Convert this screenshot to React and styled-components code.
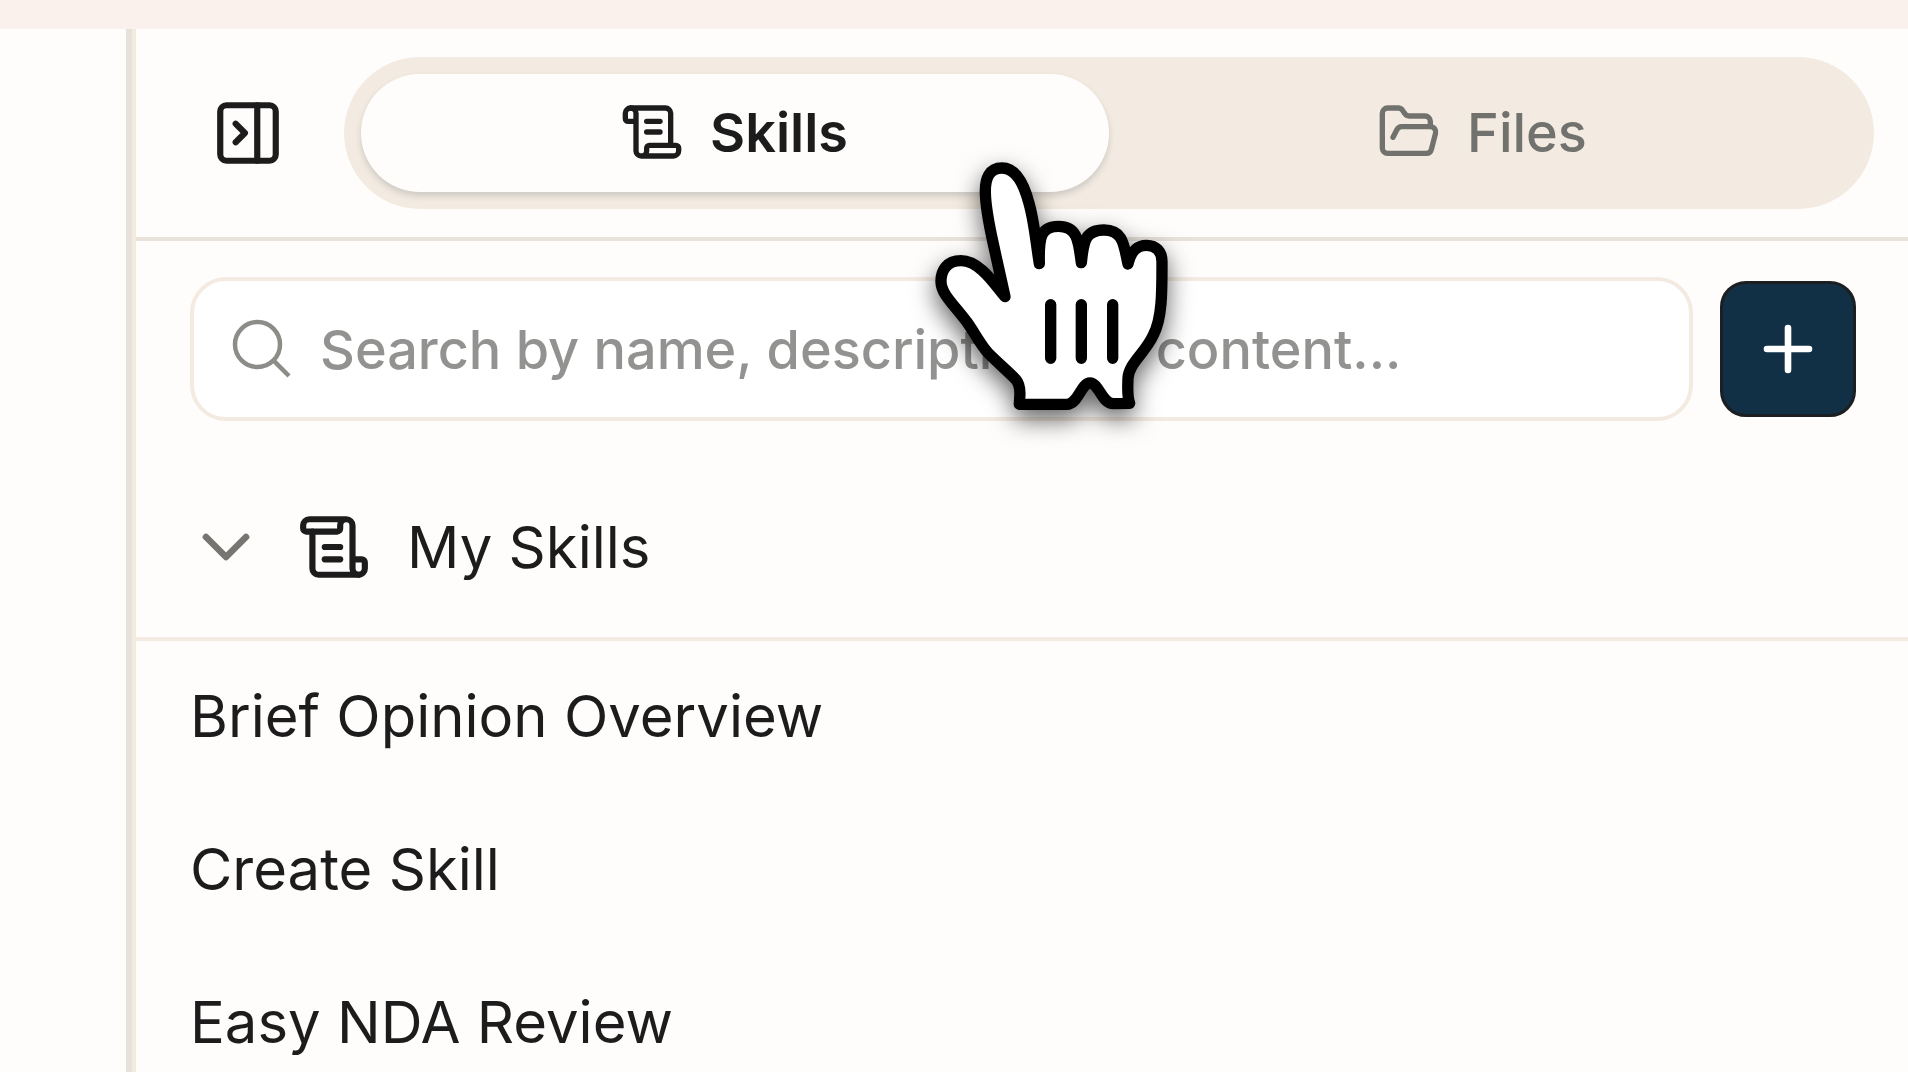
import React from 'react';
import { ChevronDown, FolderOpen, PanelRightClose, Plus, ScrollText } from 'lucide-react';
import styled, { createGlobalStyle } from 'styled-components';

const GlobalStyle = createGlobalStyle`
* {
box-sizing:border-box;
}
body {
margin:0;
font-family:Inter, "Liberation Sans", sans-serif;
font-optical-sizing:none;
color:#1c1c1c;
background-color:#fffdfc;
}
button, input {
font:inherit;
font-optical-sizing:none;
color:inherit;
}
svg {
display:block;
flex-shrink:0;
}
`;

const Container = styled.div`
position:relative;
display:flex;
flex-direction:column;
height:100vh;
overflow:hidden;
`;
const TopBand = styled.div`
flex-shrink:0;
height:29px;
background-color:#faf1ec;
`;
const Content = styled.div`
flex:1;
display:flex;
min-height:0;
`;
const Gutter = styled.div`
width:126px;
flex-shrink:0;
`;
const Panel = styled.aside`
flex:1;
min-width:0;
border-left:6px solid #e7e1dc;
box-shadow:inset 4px 0 0 #f3ebe0;
padding-left:4px;
overflow:hidden;
`;
const Header = styled.header`
display:flex;
align-items:center;
gap:59px;
padding:28px 34px 28px 75px;
border-bottom:4px solid #e9e2db;
`;
const IconButton = styled.button`
border:none;
background:none;
padding:0;
`;
const Tabs = styled.div`
flex:1;
display:flex;
padding:17px;
border-radius:76px;
background-color:#f3ebe1;
`;
const Tab = styled.button`
flex:1;
display:flex;
align-items:center;
justify-content:center;
gap:26px;
height:118px;
padding:0 2px 2px 0;
border:none;
border-radius:59px;
font-size:54px;
font-weight:${props=>props.$active ? 600 : 500};
color:${props=>props.$active ? "#1c1c1c" : "#71716e"};
background-color:${props=>props.$active ? "#fffdfc" : "transparent"};
box-shadow:${props=>props.$active ? "0 4px 6px rgba(60,70,80,0.2)" : "none"};
`;
const SearchRow = styled.div`
display:flex;
align-items:center;
gap:27px;
padding:36px 52px 36px 54px;
`;
const SearchBox = styled.label`
flex:1;
display:flex;
align-items:center;
gap:22px;
height:144px;
padding:0 32px;
border:4px solid #f3ebe1;
border-radius:36px;
background-color:white;
color:#8c8c89;
`;
const SearchInput = styled.input`
flex:1;
min-width:0;
border:none;
outline:none;
padding:0;
background:none;
font-size:54px;
font-weight:500;
&::placeholder {
color:#929290;
opacity:1;
}
`;
const AddButton = styled.button`
display:flex;
align-items:center;
justify-content:center;
width:136px;
height:136px;
padding:0;
border:3px solid #1c1f22;
border-radius:26px;
background-color:#112f45;
color:white;
`;
const SectionHeader = styled.button`
display:flex;
align-items:center;
width:100%;
height:184px;
padding:0 50px;
border:none;
border-bottom:4px solid #f3ebe1;
background:none;
font-size:58px;
text-align:left;
`;
const Chevron = styled(ChevronDown)`
color:#757572;
margin-right:31px;
`;
const SectionIcon = styled(ScrollText)`
rotate:180deg;
margin-right:36px;
`;
const List = styled.ul`
margin:0;
padding:0;
list-style:none;
`;
const ListItem = styled.li`
display:flex;
align-items:center;
height:153px;
padding:0 54px 4px;
font-size:58px;
`;
const Pointer = styled.svg`
position:absolute;
top:140px;
left:900px;
width:300px;
height:300px;
pointer-events:none;
overflow:visible;
filter:drop-shadow(0 10px 12px rgba(0,0,0,0.6));
`;

const skills = ["Brief Opinion Overview", "Create Skill", "Easy NDA Review"];

const SearchIcon = () => (
    <svg width="72" height="72" viewBox="0 0 24 24" fill="none" stroke="currentColor" strokeWidth="1.5">
        <path d="m21 21-5.197-5.197m0 0A7.5 7.5 0 1 0 5.196 5.196a7.5 7.5 0 0 0 10.607 10.607Z"/>
    </svg>
)

const HandPointer = () => (
    <Pointer viewBox="0 0 900 900" fill="white" stroke="black" strokeWidth="34" strokeLinecap="round" strokeLinejoin="round" aria-hidden="true">
        <path d="M418 371 C408 310 403 245 387 190 C370 125 345 84 306 84 C268 84 255 115 256 158 C257 215 272 275 285 335 C296 385 305 425 315 470 C285 435 240 362 183 362 C140 362 122 392 123 426 C124 462 160 492 200 545 C225 580 240 612 265 640 C295 670 325 695 347 718 C360 733 361 755 359 775 L358 793 L500 793 C535 793 543 729 570 729 C597 729 605 791 640 791 L689 790 C681 770 683 750 684 715 C686 670 735 640 760 585 C787 535 786 450 786 365 C786 335 768 316 740 316 C705 316 692 340 684 372 C672 320 672 270 612 270 C555 270 550 305 544 368 C536 310 535 259 476 259 C422 259 416 290 418 371 Z"/>
        <path d="M452 494V655M544 494V655M638 494V655"/>
    </Pointer>
)

const App = () => {
    return (
        <Container>
            <GlobalStyle/>
            <TopBand/>
            <Content>
                <Gutter/>
                <Panel>
                    <Header>
                        <IconButton aria-label="Collapse panel">
                            <PanelRightClose size={74}/>
                        </IconButton>
                        <Tabs role="tablist">
                            <Tab role="tab" aria-selected="true" $active>
                                <ScrollText size={64}/>
                                Skills
                            </Tab>
                            <Tab role="tab" aria-selected="false">
                                <FolderOpen size={64}/>
                                Files
                            </Tab>
                        </Tabs>
                    </Header>
                    <SearchRow>
                        <SearchBox>
                            <SearchIcon/>
                            <SearchInput type="text" aria-label="Search skills" placeholder="Search by name, description, or content..."/>
                        </SearchBox>
                        <AddButton aria-label="Add skill">
                            <Plus size={72} strokeWidth={2.2}/>
                        </AddButton>
                    </SearchRow>
                    <SectionHeader aria-expanded="true">
                        <Chevron size={80}/>
                        <SectionIcon size={74}/>
                        My Skills
                    </SectionHeader>
                    <List>
                        {skills.map(skill => <ListItem key={skill}>{skill}</ListItem>)}
                    </List>
                </Panel>
            </Content>
            <HandPointer/>
        </Container>
    )
}

export default App;
